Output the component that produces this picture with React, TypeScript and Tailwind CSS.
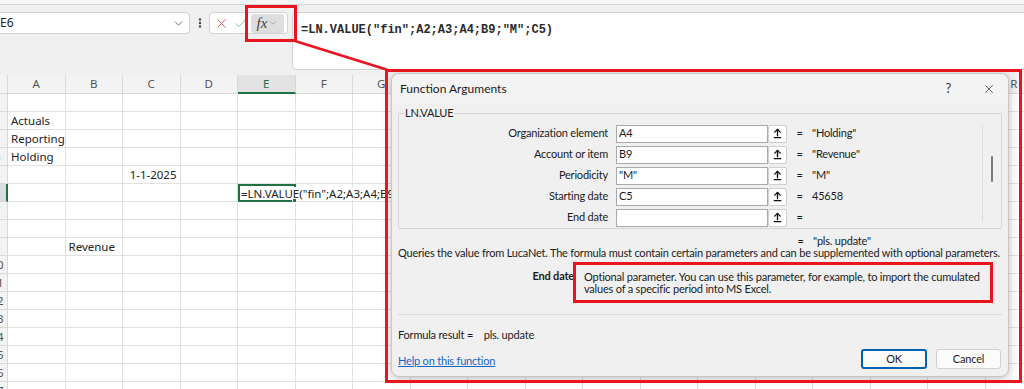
import React from 'react'
import { ChevronDown, X, Check, EllipsisVertical, ArrowUpFromLine } from 'lucide-react'

const cols = ['A', 'B', 'C', 'D', 'E', 'F', 'G', 'H', 'I', 'J', 'K', 'L', 'M', 'N', 'O', 'P', 'Q', 'R']
const rows = Array.from({ length: 17 }, (_, i) => i + 1)

const cells: Record<string, { text: string; right?: boolean }> = {
  A2: { text: 'Actuals' },
  A3: { text: 'Reporting' },
  A4: { text: 'Holding' },
  C5: { text: '1-1-2025', right: true },
  B9: { text: 'Revenue' },
}

const args = [
  { label: 'Organization element', input: 'A4', value: '"Holding"' },
  { label: 'Account or item', input: 'B9', value: '"Revenue"' },
  { label: 'Periodicity', input: '"M"', value: '"M"' },
  { label: 'Starting date', input: 'C5', value: '45658' },
  { label: 'End date', input: '', value: '' },
]

function FormulaBar() {
  return (
    <div className="bg-[#f0f0f0]">
      <div className="h-[5px] bg-[#f6f6f6] border-b border-[#d6d6d6]" />
      <div className="flex items-start pt-[7px]">
        <div className="w-[190px] h-[22px] bg-white border border-l-0 border-[#d2d2d2] rounded-r-[4px] flex items-center justify-between">
          <span className="text-[12px] text-[#222]">E6</span>
          <ChevronDown className="w-[13px] h-[13px] mr-[4px] text-[#555]" strokeWidth={1.5} />
        </div>
        <div className="w-[19px] h-[22px] flex items-center justify-center">
          <EllipsisVertical className="w-[12px] h-[12px] text-[#444]" strokeWidth={3} />
        </div>
        <div className="w-[79px] h-[22px] bg-white border border-[#d2d2d2] rounded-[4px] flex items-center pl-[4px]">
          <X className="w-[15px] h-[15px] text-[#e0474c]" strokeWidth={1.4} />
          <Check className="w-[15px] h-[15px] ml-[4px] text-[#7fb98f]" strokeWidth={1.4} />
          <div className="ml-[3px] h-[19px] w-[33px] bg-[#dedede] rounded-[3px] flex items-center justify-center">
            <span className="font-['Liberation_Serif',serif] italic text-[15px] text-[#444] leading-none">fx</span>
            <ChevronDown className="w-[10px] h-[10px] ml-[1px] text-[#888]" strokeWidth={1.5} />
          </div>
        </div>
        <div className="ml-[4px] flex-1 -mr-[8px] h-[58px] bg-white border border-[#d2d2d2] rounded-[5px] pl-[8px] pt-[2px]">
          <span className="font-['Liberation_Mono',monospace] font-bold text-[12px] text-[#2a2a2a]">
            =LN.VALUE("fin";A2;A3;A4;B9;"M";C5)
          </span>
        </div>
      </div>
    </div>
  )
}

function Sheet() {
  return (
    <div className="mt-[5px] grid grid-cols-[8px_repeat(18,57.5px)] grid-rows-[19px_repeat(17,18px)] bg-white text-[11.5px] text-[#222] font-['Noto_Sans',sans-serif]">
      <div className="bg-[#f3f3f3] border-r border-b border-[#d9d9d9]" />
      {cols.map((c) => (
        <div
          key={c}
          className={
            c === 'E'
              ? 'bg-[#e3e3e3] border-r border-[#d9d9d9] border-b-2 border-b-[#1e7145] flex items-center justify-center text-[#1e7145]'
              : 'bg-[#f3f3f3] border-r border-b border-[#d9d9d9] flex items-center justify-center text-[#555]'
          }
        >
          {c}
        </div>
      ))}
      {rows.map((r) => (
        <React.Fragment key={r}>
          <div
            className={
              r === 6
                ? 'bg-[#dcdcdc] border-r-2 border-r-[#1e7145] border-b border-[#d9d9d9] overflow-hidden'
                : 'bg-[#f3f3f3] border-r border-b border-[#d9d9d9] overflow-hidden'
            }
          >
            <div className="w-[24px] -ml-[15px] text-center text-[#555] leading-[17px]">{r}</div>
          </div>
          {cols.map((c) => {
            const id = c + r
            const cell = cells[id]
            if (id === 'E6') {
              return (
                <div key={id} className="relative z-10 border-2 border-[#1e7145] flex items-center pl-[1px] whitespace-nowrap">
                  <span className="bg-white leading-[13px]">=LN.VALUE("fin";A2;A3;A4;B9;"M";C5)</span>
                  <div className="absolute -right-[3px] -bottom-[3px] w-[5px] h-[5px] bg-[#1e7145] border border-white" />
                </div>
              )
            }
            return (
              <div
                key={id}
                className={`border-r border-b border-[#e1e1e1] flex items-center px-[3px] whitespace-nowrap overflow-visible ${
                  cell?.right ? 'justify-end' : ''
                }`}
              >
                {cell?.text}
              </div>
            )
          })}
        </React.Fragment>
      ))}
    </div>
  )
}

function Dialog() {
  return (
    <div className="absolute z-20 left-[391px] top-[73px] w-[618px] h-[304px] rounded-[8px] bg-[#f0f0f0] border border-[#c6c6c6] shadow-[0_2px_10px_rgba(0,0,0,0.25)] font-['Lato','Noto_Sans',sans-serif] text-[11px] tracking-[-0.2px] text-[#1b1b1b] flex flex-col">
      <div className="h-[29px] flex items-center pl-[8px] pr-[12px] bg-[#f3f3f3] rounded-t-[8px]">
        <span className="text-[12px] tracking-normal flex-1">Function Arguments</span>
        <span className="text-[13px] text-[#333] mr-[31px]">?</span>
        <X className="w-[14px] h-[14px] text-[#333]" strokeWidth={1.3} />
      </div>
      <div className="px-[6px] flex-1 flex flex-col">
        <fieldset className="mt-[3px] h-[123px] border border-[#d6d6d6] rounded-[2px] flex">
          <legend className="ml-[5px] px-[1px] leading-[14px]">LN.VALUE</legend>
          <div className="flex-1 flex flex-col gap-[4px] pt-[5px]">
            {args.map((a) => (
              <div key={a.label} className="flex items-center h-[17px]">
                <div className="w-[210px] text-right pr-[1px]">{a.label}</div>
                <div className="ml-[7px] w-[152px] h-[18px] bg-white border border-[#a9a9a9] flex items-center pl-[2px]">
                  {a.input}
                </div>
                <div className="w-[19px] h-[18px] bg-white border border-[#cfcfcf] rounded-[2px] flex items-center justify-center">
                  <ArrowUpFromLine className="w-[11px] h-[11px] text-[#111]" strokeWidth={3} />
                </div>
                <div className="w-[25px] text-center">=</div>
                <div>{a.value}</div>
              </div>
            ))}
          </div>
          <div className="w-[19px] mt-[5px] mb-[4px] border-l border-[#dedede] flex justify-center">
            <div className="mt-[31px] w-[2px] h-[26px] bg-[#7a7a7a] rounded-full" />
          </div>
        </fieldset>
        <div className="flex mt-[5px] h-[14px] items-center">
          <div className="w-[390px]" />
          <div className="w-[25px] text-center">=</div>
          <div>"pls. update"</div>
        </div>
        <div className="-mt-[1px] leading-[12px] whitespace-nowrap">
          Queries the value from LucaNet. The formula must contain certain parameters and can be supplemented with optional parameters.
        </div>
        <div className="flex mt-[3px]">
          <div className="w-[176px] text-right font-bold pt-[8px] leading-[12px]">End date</div>
          <div className="-ml-[1px] w-[420px] h-[41px] border-[3px] border-[#e8151f] pl-[8px] pt-[6px] leading-[11.5px] whitespace-nowrap">
            Optional parameter. You can use this parameter, for example, to import the cumulated
            <br />
            values of a specific period into MS Excel.
          </div>
        </div>
        <div className="mt-[11px] border-t border-[#dcdcdc]" />
        <div className="flex items-end justify-between mt-[13px]">
          <div className="flex flex-col leading-[14px]">
            <div>
              Formula result = <span className="ml-[8px]">pls. update</span>
            </div>
            <div className="mt-[12px] text-[#1a64c8] underline">Help on this function</div>
          </div>
          <div className="flex gap-[9px] pr-[1px] -mb-[1px]">
            <div className="w-[66px] h-[20px] bg-[#fbfbfb] border-2 border-[#0063b1] rounded-[3px] flex items-center justify-center">OK</div>
            <div className="w-[65px] h-[20px] bg-[#fbfbfb] border border-[#d0d0d0] rounded-[3px] flex items-center justify-center">Cancel</div>
          </div>
        </div>
      </div>
    </div>
  )
}

export default function App() {
  return (
    <div className="relative w-[1024px] h-[389px] overflow-hidden bg-[#f0f0f0] font-['Noto_Sans',sans-serif]">
      <FormulaBar />
      <Sheet />
      <Dialog />
      {/* red annotations */}
      <div className="absolute z-30 left-[245px] top-[5px] w-[52px] h-[37px] border-[3px] border-[#e8151f]" />
      <div className="absolute z-30 left-[385px] top-[69px] w-[637px] h-[314px] border-[3px] border-[#e8151f]" />
      <svg className="absolute z-30 inset-0 pointer-events-none" width="1024" height="389">
        <line x1="295" y1="41" x2="388" y2="70" stroke="#e8151f" strokeWidth="2.5" />
      </svg>
    </div>
  )
}
